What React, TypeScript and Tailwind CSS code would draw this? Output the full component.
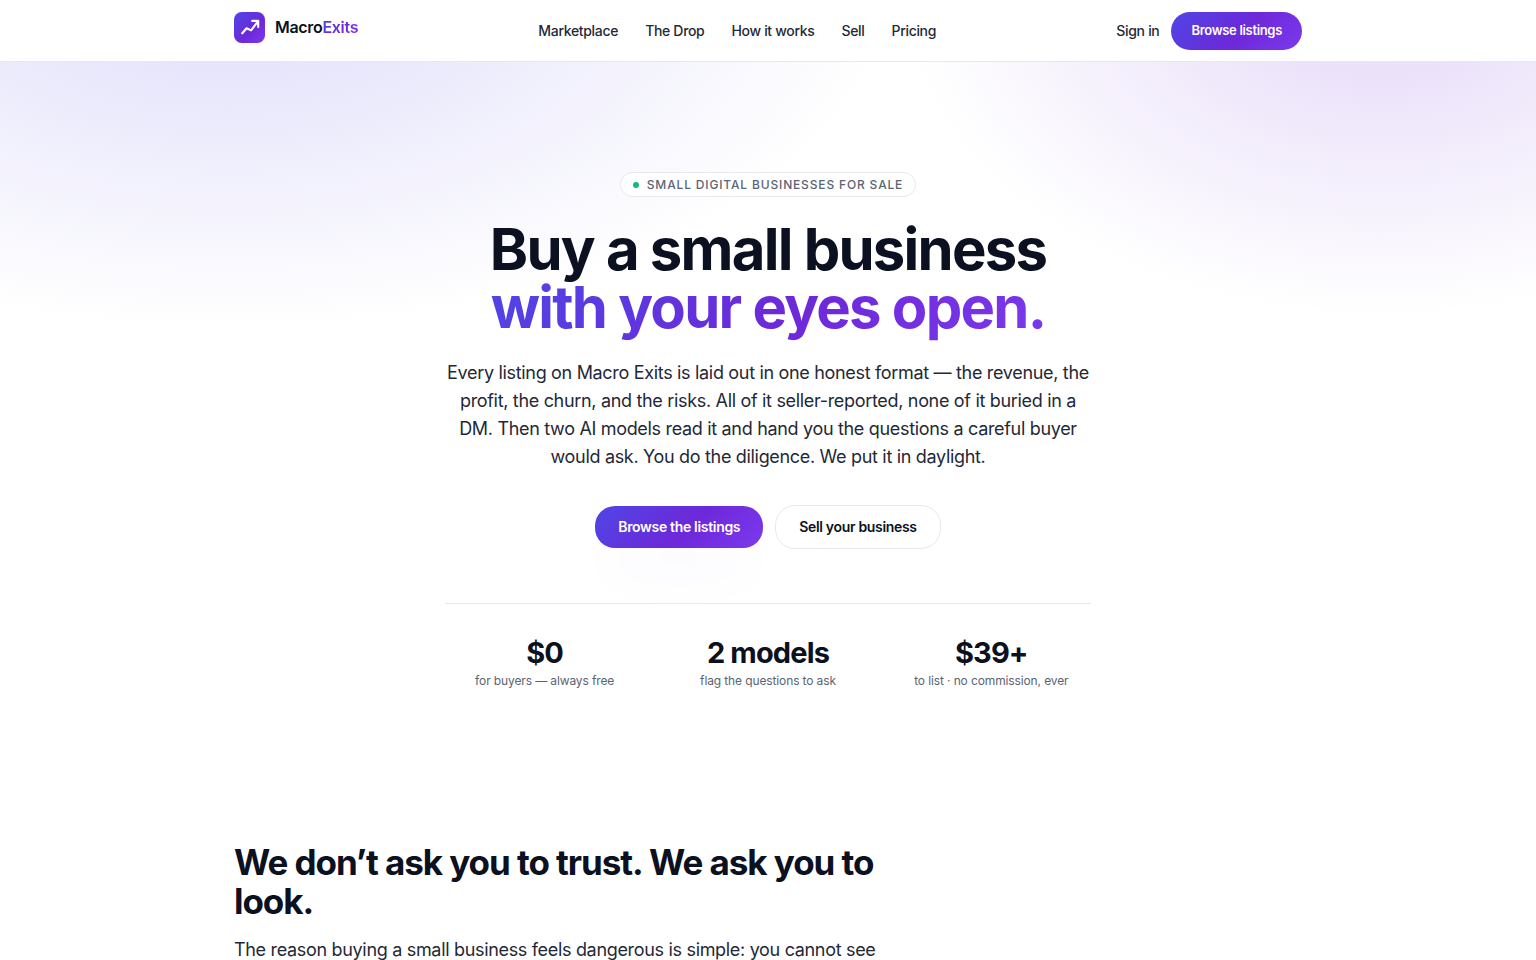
const navLinks = ["Marketplace", "The Drop", "How it works", "Sell", "Pricing"];

const stats = [
  { value: "$0", label: "for buyers — always free" },
  { value: "2 models", label: "flag the questions to ask" },
  { value: "$39+", label: "to list · no commission, ever" },
];

function Logo() {
  return (
    <a href="#" className="mb-1.5 flex items-center gap-2.5">
      <svg width="31" height="31" viewBox="0 0 32 32" fill="none" aria-hidden="true">
        <defs>
          <linearGradient id="mark" x1="0" y1="0" x2="1" y2="1">
            <stop offset="0" stopColor="#4f46e5" />
            <stop offset="0.6" stopColor="#6d28d9" />
            <stop offset="1" stopColor="#7c3aed" />
          </linearGradient>
        </defs>
        <rect width="32" height="32" rx="8" fill="url(#mark)" />
        <path
          d="M8.5 22L13 16.8L17.6 19L24.5 10M18.8 9.2H25V15.6"
          stroke="white"
          strokeWidth="2.2"
          strokeLinecap="round"
          strokeLinejoin="round"
        />
      </svg>
      <span className="pb-0.5 text-base font-semibold text-[#0b1120]">
        Macro
        <span className="bg-[linear-gradient(135deg,#4f46e5,#6d28d9_55%,#7c3aed)] bg-clip-text text-transparent">Exits</span>
      </span>
    </a>
  );
}

function Header() {
  return (
    <header className="border-b border-[#e8e9ef] bg-white">
      <div className="mx-auto flex h-[61px] max-w-[1116px] items-center justify-between px-6">
        <Logo />
        <nav className="flex items-center gap-[27px] text-sm font-medium text-[#1f2937]">
          {navLinks.map((link) => (
            <a key={link} href="#">
              {link}
            </a>
          ))}
        </nav>
        <div className="flex items-center gap-3">
          <a href="#" className="text-sm font-medium text-[#1f2937]">
            Sign in
          </a>
          <button className="h-[38px] rounded-full bg-[linear-gradient(135deg,#4f46e5,#6d28d9_55%,#7c3aed)] px-5 text-[13px] font-semibold text-white">
            Browse listings
          </button>
        </div>
      </div>
    </header>
  );
}

function Hero() {
  return (
    <section className="bg-[radial-gradient(1100px_560px_at_15%_-70px,rgba(79,70,229,0.18),transparent_60%),radial-gradient(800px_540px_at_90%_-70px,rgba(109,40,217,0.18),transparent_60%)] px-6 pt-[110px] pb-20">
      <div className="mx-auto flex max-w-[646px] flex-col items-center text-center">
        <p className="flex h-[25px] items-center gap-2 rounded-full border border-[#e8e9ef] bg-white px-3 text-xs font-medium tracking-[0.07em] text-[#5b6475] uppercase">
          <span className="size-1.5 rounded-full bg-[#10b981]" />
          Small digital businesses for sale
        </p>
        <h1 className="mt-[23px] text-[58px] leading-[58px] font-bold tracking-[-0.03em] whitespace-nowrap text-[#0b1120]">
          <span className="block">Buy a small business</span>
          <span className="block bg-[linear-gradient(135deg,#4f46e5,#6d28d9_55%,#7c3aed)] bg-clip-text pb-2 text-transparent">
            with your eyes open.
          </span>
        </h1>
        <p className="mt-[15px] text-lg leading-7 text-[#1f2937]">
          Every listing on Macro Exits is laid out in one honest format — the revenue, the profit, the churn, and the
          risks. All of it seller-reported, none of it buried in a DM. Then two AI models read it and hand you the
          questions a careful buyer would ask. You do the diligence. We put it in daylight.
        </p>
        <div className="mt-[34px] flex items-center gap-3">
          <button className="h-[42px] rounded-[20px] bg-[linear-gradient(135deg,#4f46e5,#6d28d9_55%,#7c3aed)] px-[23px] text-sm font-semibold text-white shadow-[0_30px_60px_-12px_rgba(79,70,229,0.05)]">
            Browse the listings
          </button>
          <button className="h-11 rounded-[20px] border border-[#e8e9ef] bg-white px-[23px] text-sm font-semibold text-[#0b1120]">
            Sell your business
          </button>
        </div>
        <dl className="mt-[54px] grid w-full grid-cols-3 gap-6 border-t border-[#e8e9ef] pt-[31px]">
          {stats.map((stat) => (
            <div key={stat.label} className="flex flex-col-reverse">
              <dt className="text-xs leading-5 tracking-[-0.01em] text-[#5b6475]">{stat.label}</dt>
              <dd className="text-[29px] leading-9 font-bold tracking-[-0.03em] text-[#0b1120]">{stat.value}</dd>
            </div>
          ))}
        </dl>
      </div>
    </section>
  );
}

export default function App() {
  return (
    <div className="min-h-screen bg-white font-[Inter,sans-serif] tracking-[-0.02em]">
      <Header />
      <main>
        <Hero />
        <section className="mx-auto max-w-[1116px] px-6 pt-[72px]">
          <div className="max-w-[660px]">
            <h2 className="text-[35px] leading-[39px] font-bold tracking-[-0.03em] text-[#0b1120]">
              We don’t ask you to trust. We ask you to look.
            </h2>
            <p className="mt-[15px] text-lg leading-7 text-[#1f2937]">
              The reason buying a small business feels dangerous is simple: you cannot see
            </p>
          </div>
        </section>
      </main>
    </div>
  );
}
